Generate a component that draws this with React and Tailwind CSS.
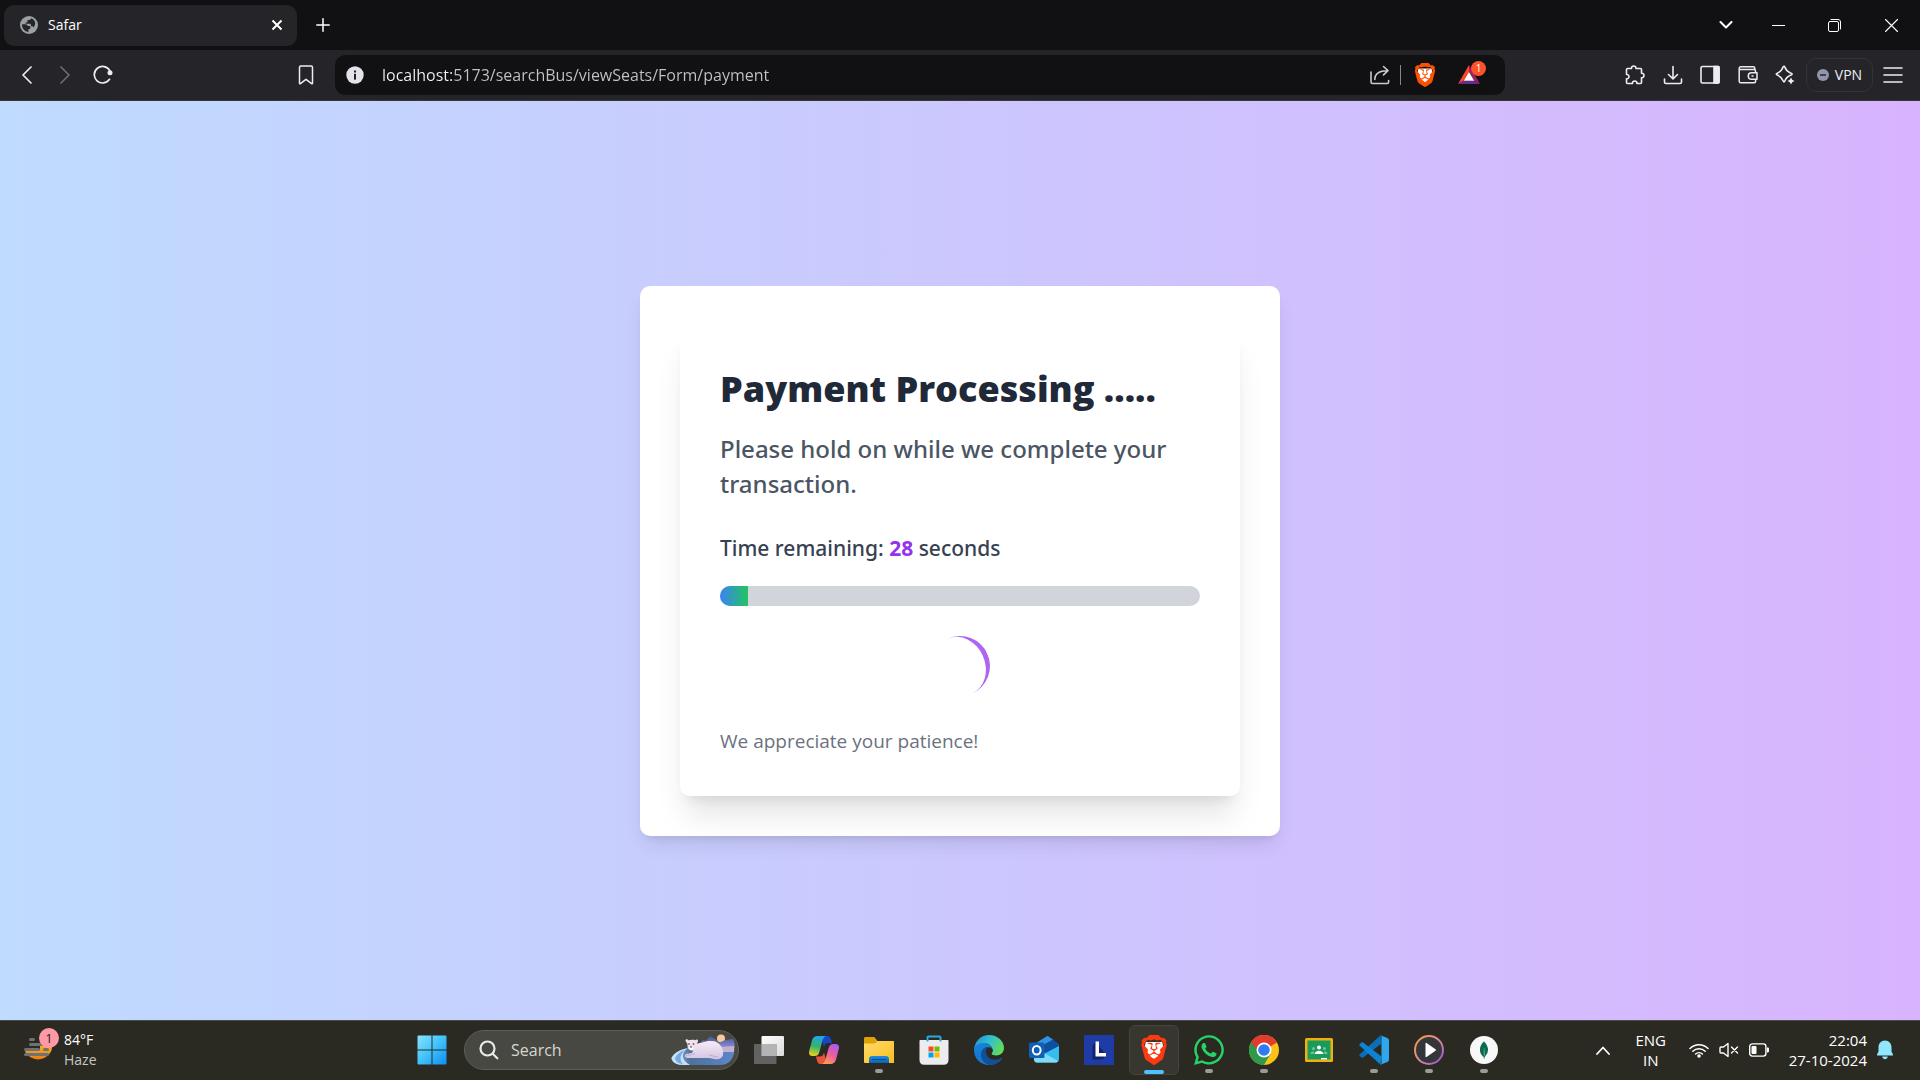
import React from "react";
import { SiBrave, SiMongodb } from "react-icons/si";
import { FaWhatsapp } from "react-icons/fa";

/* ---------- browser icons ---------- */

const line = {
  fill: "none",
  stroke: "currentColor",
  strokeLinecap: "round",
  strokeLinejoin: "round",
};

const GlobeIcon = () => (
  <svg width="18" height="18" viewBox="0 0 18 18">
    <circle cx="9" cy="9" r="9" fill="#9aa0a6" />
    <path
      d="M2 8.200h3.500c1.500 0 2 .8 2 1.800h1.500c1 0 1.500.6 1.500 1.500s-.6 1.500-1.500 1.500H8.500v2.800C4.800 15.800 1.800 12.400 2 8.200z"
      fill="#252529"
    />
    <path
      d="M11 2.300c-.1 1.200-.8 1.700-1.700 1.700H7.500v1.400c0 .6-.4 1-1 1h-1v1.300h4.200c.8 0 1.300.5 1.300 1.300v1.300h.8c.9 0 1.500.5 1.700 1.300 2.900-3.500 2-7.800-2.500-9.300z"
      fill="#252529"
    />
  </svg>
);

const TabCloseIcon = () => (
  <svg width="12" height="12" viewBox="0 0 12 12" {...line} strokeWidth="2" strokeLinecap="butt">
    <path d="M1.500 1.500l9 9M10.500 1.500l-9 9" />
  </svg>
);

const PlusIcon = () => (
  <svg width="14" height="14" viewBox="0 0 14 14" {...line} strokeWidth="1.500">
    <path d="M7 .8v12.400M.8 7h12.400" />
  </svg>
);

const BackIcon = () => (
  <svg width="12" height="18" viewBox="0 0 12 18" {...line} strokeWidth="1.700">
    <path d="M10 1L2 9l8 8" />
  </svg>
);

const ForwardIcon = () => (
  <svg width="12" height="18" viewBox="0 0 12 18" {...line} strokeWidth="1.700">
    <path d="M2 1l8 8-8 8" />
  </svg>
);

const ReloadIcon = () => (
  <svg width="20" height="20" viewBox="0 0 20 20" {...line} strokeWidth="1.700">
    <path d="M16.500 14.300A8.300 8.300 0 1 1 16.800 5.600" />
    <circle cx="17" cy="7.800" r="2.500" fill="currentColor" stroke="none" />
  </svg>
);

const BookmarkIcon = () => (
  <svg width="16" height="20" viewBox="0 0 16 20" {...line} strokeWidth="1.500">
    <path d="M1.500 2.500c0-.8.600-1.400 1.400-1.400h10.200c.8 0 1.400.6 1.400 1.400v15.700c0 .5-.5.700-.9.400L8 14.300l-5.600 4.300c-.4.300-.9.100-.9-.4z" />
  </svg>
);

const InfoIcon = () => (
  <svg width="18" height="18" viewBox="0 0 18 18">
    <circle cx="9" cy="9" r="8.700" fill="#e4e3ea" />
    <rect x="8" y="4.500" width="2" height="2" fill="#222226" />
    <rect x="8" y="7.800" width="2" height="5.800" fill="#222226" />
  </svg>
);

const ShareIcon = () => (
  <svg width="20" height="20" viewBox="0 0 20 20" {...line} strokeWidth="1.600">
    <path d="M1 7v10c0 .9.600 1.500 1.500 1.500h14.600c.9 0 1.500-.6 1.500-1.500v-1.500" />
    <path d="M4.800 14.500C4.800 9 8.500 5.700 17.500 5.700M13.500 1.500l4.500 4.200-4.500 4.200" />
  </svg>
);

const Lion = ({ size, fill }) => (
  <svg width={size} height={size} viewBox="0 0 24 24">
    <path d="M5.500 5.500h13l1 4-2 6.500L12 20.500 6.500 16l-2-6.500z" fill="#fff" />
    <SiBrave size={24} color={fill} />
  </svg>
);

const RewardsIcon = () => (
  <svg width="24" height="20" viewBox="0 0 24 20">
    <path d="M12 0L1 19l5.800-3.300L12 7z" fill="#ff4724" />
    <path d="M12 0l11 19-5.800-3.300L12 7z" fill="#9e1f63" />
    <path d="M1 19h22l-5.800-3.300H6.800z" fill="#662d91" />
    <path d="M12 7l5.200 8.700H6.800z" fill="#fff" />
  </svg>
);

const PuzzleIcon = () => (
  <svg width="20" height="20" viewBox="0 0 20 20" {...line} strokeWidth="1.600">
    <path d="M2.500 3.500h4C6.300 1.900 7.400 1 8.700 1s2.500.9 2.300 2.500h4.500c.7 0 1 .4 1 1V8.300c1.600-.2 2.500.9 2.500 2.200s-.9 2.400-2.500 2.200v4.800c0 .7-.4 1-1 1h-3.600c.2-1.600-.9-2.500-2.200-2.500s-2.400.9-2.200 2.500H2.500c-.7 0-1-.4-1-1v-3.700c1.600.2 2.500-.9 2.500-2.200S3.100 9.300 1.500 9.500v-5c0-.6.300-1 1-1z" />
  </svg>
);

const DownloadIcon = () => (
  <svg width="20" height="20" viewBox="0 0 20 20" {...line} strokeWidth="1.600">
    <path d="M10 1.500v12M5.500 9.500l4.500 4.300 4.500-4.300M1.500 14v3c0 .9.600 1.500 1.500 1.500h14c.9 0 1.500-.6 1.500-1.500v-3" />
  </svg>
);

const SidebarIcon = () => (
  <svg width="20" height="20" viewBox="0 0 20 20" {...line} strokeWidth="1.600">
    <rect x="1" y="1.500" width="18" height="16.500" rx="1.500" />
    <path d="M14 1.500h4.500l.5.500v15.500l-.5.500H14z" fill="currentColor" />
  </svg>
);

const WalletIcon = () => (
  <svg width="20" height="20" viewBox="0 0 20 20" {...line} strokeWidth="1.500">
    <path d="M17.500 7.500V6c0-.8-.6-1.400-1.400-1.400H1.200M1.200 3.500v12.700c0 .9.700 1.600 1.600 1.600h13.300c.9 0 1.500-.6 1.500-1.500v-1.500M1.200 3.500c0-1.100.7-1.700 1.600-1.700h12.400c1 0 1.600.6 1.600 1.500v1.300" />
    <path d="M19 7.800h-5.500c-1.800 0-3.200 1.400-3.200 3.200s1.400 3.300 3.200 3.300H19zM14 11h1" />
  </svg>
);

const SparkleIcon = () => (
  <svg width="20" height="20" viewBox="0 0 20 20" {...line} strokeWidth="1.600">
    <path d="M9 1.200c.4 0 .6.300.8.800 1 2.900 2 4.200 5.200 5.700l1.500.7c.8.400.8 1 0 1.400-3.500 1.300-5.300 2.800-6.600 6-.3.800-.5 1.200-.9 1.200s-.6-.4-.9-1.200c-1.300-3.200-3-4.700-6.200-6-.8-.4-.8-1 0-1.400 3.200-1.300 4.900-2.700 6.200-6.400.3-.5.500-.8.900-.8z" />
    <path d="M16 12.500l1.200 2.300 2.300 1.200-2.300 1.200L16 19.500l-1.200-2.300-2.300-1.200 2.300-1.200z" fill="currentColor" stroke="none" />
  </svg>
);

const MenuIcon = () => (
  <svg width="20" height="16" viewBox="0 0 20 16" {...line} strokeWidth="1.600">
    <path d="M1 1h18M1 8h18M1 15h18" />
  </svg>
);

/* ---------- taskbar icons ---------- */

const HazeIcon = () => (
  <svg width="30" height="30" viewBox="0 0 30 30">
    <defs>
      <linearGradient id="haze" x1="0" y1="0" x2="0" y2="1">
        <stop offset="0" stopColor="#fbc02d" />
        <stop offset="1" stopColor="#ef7c12" />
      </linearGradient>
    </defs>
    <path d="M1 16a14 13 0 0 0 27-6c.3-4-10-6-12 0v5z" fill="url(#haze)" />
    <g stroke="#6f7174" strokeWidth="3" strokeLinecap="round">
      <path d="M6.500 4.500h3M6.500 9.500h15M1.500 14.500h13M20.500 14.500h3M1.500 19.500h22" />
    </g>
  </svg>
);

const WindowsIcon = () => (
  <svg width="30" height="30" viewBox="0 0 30 30">
    <defs>
      <linearGradient id="win" x1="0" y1="0" x2="30" y2="30" gradientUnits="userSpaceOnUse">
        <stop offset="0" stopColor="#8be4fd" />
        <stop offset=".5" stopColor="#3fc2fb" />
        <stop offset="1" stopColor="#0a8bf5" />
      </linearGradient>
    </defs>
    <path
      d="M1.500.5H14.500V14.500H.5V1.500a1 1 0 0 1 1-1zM15.500.5H28.500a1 1 0 0 1 1 1V14.500H15.500zM.5 15.500H14.500V29.500H1.500a1 1 0 0 1-1-1zM15.500 15.500H29.500V28.500a1 1 0 0 1-1 1H15.500z"
      fill="url(#win)"
    />
  </svg>
);

const BearPicture = () => (
  <svg width="64" height="32" viewBox="0 0 64 32">
    <defs>
      <linearGradient id="mount" x1="0" y1="0" x2="0" y2="1">
        <stop offset="0" stopColor="#46569b" />
        <stop offset="1" stopColor="#8d8fd0" />
      </linearGradient>
      <linearGradient id="ice" x1="0" y1="0" x2="1" y2="0">
        <stop offset="0" stopColor="#9cc9ef" />
        <stop offset=".3" stopColor="#4d7299" />
        <stop offset="1" stopColor="#5b86cc" />
      </linearGradient>
      <linearGradient id="fur" x1="0" y1="0" x2="0" y2="1">
        <stop offset="0" stopColor="#f7ecf6" />
        <stop offset="1" stopColor="#d5c4e2" />
      </linearGradient>
    </defs>
    <circle cx="50" cy="4.500" r="4" fill="#f6c9a0" />
    <path d="M29 10l3-4 3 1 4-5 5 3 4 4 6-3 8-1c1.500 3 2 5 1.500 9H29z" fill="url(#mount)" />
    <path d="M48 13l15-1c1 6-1 11-4 14H48z" fill="#c5b1d0" />
    <path d="M50 18h13c-1 7-5 13-14 13H12C5 31 1 28 .5 24 3 19 9 15.500 17 14z" fill="url(#ice)" />
    <path d="M.5 24C3 19 9 15.500 17 14c-6 4-8 11 2 17h-7C5 31 1 28 .5 24z" fill="#c4e1f8" />
    <path d="M4 24c2-4 6-7 10-8-5 4-6 10-2 14-4 0-8-3-8-6z" fill="#76a9dd" />
    <path d="M25 10c6-1 9-3 15-3 9 0 13 8 12 14-.6 3-4 5-9 4-3-.6-4-1-6-1H18c-3 0-5-1-4-3 1-1.500 5-1.500 7-2z" fill="url(#fur)" />
    <path d="M38 21c3 0 5 2 9 2" fill="none" stroke="#bda8d2" strokeWidth="1" />
    <path d="M14.500 6.500c0-1.700 2.300-1.700 2.800-.3 2-.6 5-.8 7 0 .8-1.200 3-.8 2.700 1-.2 1-.8 1.500-.8 2 .8 3.500-1.200 7.300-5 7.300-3.500 0-5-2.500-4.700-5.500.1-1-.4-1.700-1-2.500-.5-.5-1-1.200-1-2z" fill="#efe2ee" />
    <ellipse cx="20" cy="14" rx="2.200" ry="1.700" fill="#fff" />
    <path d="M18.700 12.500h2.600l-1.300 1.500z" fill="#2b2733" />
    <circle cx="18" cy="10" r=".8" fill="#2b2733" />
    <circle cx="22.500" cy="10" r=".8" fill="#2b2733" />
    <path d="M14 22c3-1 7-1 10-2.500" fill="none" stroke="#b7a3cc" strokeWidth=".8" />
  </svg>
);

const TaskViewIcon = () => (
  <svg width="30" height="28" viewBox="0 0 30 28">
    <defs>
      <linearGradient id="tvw" x1="0" y1="0" x2="1" y2="1">
        <stop offset="0" stopColor="#fff" />
        <stop offset="1" stopColor="#d9dadc" />
      </linearGradient>
    </defs>
    <rect x="7.500" y="0" width="22.500" height="20" rx="1" fill="url(#tvw)" />
    <rect x="0" y="8" width="22.500" height="20" rx="1" fill="#68686a" fillOpacity=".9" />
    <path d="M7.500 8h15v12h-15z" fill="#b4b4b5" />
  </svg>
);

const CopilotIcon = () => (
  <svg width="30" height="28" viewBox="0 0 30 28">
    <defs>
      <linearGradient id="cpa" x1=".4" y1="0" x2=".2" y2="1">
        <stop offset="0" stopColor="#22a3e8" />
        <stop offset=".5" stopColor="#35b36b" />
        <stop offset="1" stopColor="#f3d31b" />
      </linearGradient>
      <linearGradient id="cpb" x1=".8" y1="0" x2=".2" y2="1">
        <stop offset="0" stopColor="#a45cf0" />
        <stop offset=".5" stopColor="#ee5e9a" />
        <stop offset="1" stopColor="#fda24d" />
      </linearGradient>
    </defs>
    <path d="M12 0h6.500c2 0 2.800 1.200 3.400 3L23 7h-4c-2.500 0-3.200 1.500-4 4z" fill="#1746c8" />
    <path d="M18 28h-6.500c-2 0-2.800-1.200-3.400-3L7 20.500h4c2.500 0 3.200-1.500 4-4z" fill="#e8553c" />
    <path d="M8.500 0h9C14.500.6 14 3 13 6.500l-2.500 9c-.8 3-2 4.500-5 4.500H3.500C.5 20-.5 18 .2 15L3 4.500C3.800 1.600 5.500 0 8.500 0z" fill="url(#cpa)" />
    <path d="M21.500 28h-9c3-.6 3.500-3 4.500-6.500l2.500-9c.8-3 2-4.500 5-4.500h2c3 0 4 2 3.300 5L27 23.500c-.8 2.900-2.500 4.500-5.500 4.500z" fill="url(#cpb)" />
  </svg>
);

const FolderIcon = () => (
  <svg width="30" height="27" viewBox="0 0 30 27">
    <defs>
      <linearGradient id="fold" x1="0" y1="0" x2="1" y2="1">
        <stop offset="0" stopColor="#ffdc6b" />
        <stop offset="1" stopColor="#f9bd1f" />
      </linearGradient>
      <linearGradient id="foldb" x1="0" y1="0" x2="0" y2="1">
        <stop offset="0" stopColor="#1c8fe0" />
        <stop offset="1" stopColor="#0f61b0" />
      </linearGradient>
    </defs>
    <path d="M0 1.500C0 .6.600 0 1.500 0h8c.7 0 1 .2 1.500.7L13.500 4H29a1 1 0 0 1 1 1v5H0z" fill="#e0a106" />
    <path d="M0 6.500h10c1 0 1.500-.3 2-.9L13.500 4H29a1 1 0 0 1 1 1v21H1a1 1 0 0 1-1-1z" fill="url(#fold)" />
    <path d="M5 26v-4c0-1.800 1.200-3 3-3h14c1.800 0 3 1.200 3 3v4z" fill="url(#foldb)" />
    <path d="M8.500 22.500h13" stroke="#0b4a8c" strokeWidth="1.200" strokeLinecap="round" />
  </svg>
);

const StoreIcon = () => (
  <svg width="30" height="30" viewBox="0 0 30 30">
    <path d="M.5 6c0-.6.400-1 1-1h27c.6 0 1 .4 1 1v19c0 3-1.700 4.700-4.700 4.700H5.200C2.200 29.700.5 28 .5 25z" fill="#ececee" />
    <path d="M8.500 6.500V2.500c0-.6.400-1 1-1h11c.6 0 1 .4 1 1V6.500" fill="none" stroke="#2aa9e0" strokeWidth="2" />
    <path d="M9.500 11.500h5v5h-5z" fill="#f25022" />
    <path d="M15.500 11.500h5v5h-5z" fill="#7fba00" />
    <path d="M9.500 17.500h5v5h-5z" fill="#00a4ef" />
    <path d="M15.500 17.500h5v5h-5z" fill="#ffb900" />
  </svg>
);

const EdgeIcon = () => (
  <svg width="30" height="30" viewBox="0 0 30 30">
    <defs>
      <linearGradient id="edg" x1="0" y1=".2" x2="1" y2=".6">
        <stop offset="0" stopColor="#2490d8" />
        <stop offset=".5" stopColor="#33c1cf" />
        <stop offset="1" stopColor="#62dd55" />
      </linearGradient>
      <linearGradient id="edb" x1="0" y1="0" x2="0" y2="1">
        <stop offset="0" stopColor="#1383d8" />
        <stop offset="1" stopColor="#1577cf" />
      </linearGradient>
    </defs>
    <path d="M0 14C1.500 9 6 7.500 10 8c5 .6 8.500 4 8.500 7.500L12 19c0 3 4 6.500 9 6.300 3-.1 5-1.300 6.300-2.300.5-.3.900 0 .6.500C25.500 27.500 20.500 30 15 30 6.500 30 0 23.500 0 15z" fill="url(#edb)" />
    <path d="M10 13c-2.500 2-3.500 5-3 8 .7 4.500 4 8 8.500 9 5-.2 9.700-2.500 12.400-6.500.3-.5-.1-.8-.6-.5-1.500 1-3.500 1.700-6 1.700-5 0-9.300-3.200-9.300-7.700 0-2.300 1.200-4 3-4.700-1.500-.6-3.400-.5-5 .7z" fill="#124f97" />
    <path d="M0 14C1.200 6 7 0 15 0c9 0 15 6.500 15 13 0 4.500-3.500 7.500-8 7.500-3.500 0-5-1.200-4.500-2.200.6-.8 1.200-1.600 1.200-3C18.700 11.500 14.500 8 9.500 8 5 8 1.500 10.500 0 14z" fill="url(#edg)" />
    <path d="M15 12.300c2.300 0 3.700 1.500 3.700 3.500 0 1.500-1.200 2-1.200 3.200 0 .8 1.500 1.500 3.500 1.500-2 2-7.500 1-9-2.500-.6-2.500.5-5.700 3-5.700z" fill="#2a2a23" />
  </svg>
);

const OutlookIcon = () => (
  <svg width="30" height="28" viewBox="0 0 30 28">
    <path d="M5 8.500L17.500.6c.6-.4 1.200-.4 1.800 0L30 8.500V15L5 24z" fill="#1272c4" />
    <path d="M9 9L24 3.500l6 5v4L17 20 5 14z" fill="#0d4fa0" />
    <path d="M5 8.500L17.500.6c.6-.4 1.200-.4 1.800 0l4.700 3L9 12z" fill="#2f93df" />
    <path d="M30 10v13c0 2.200-1.300 3.500-3.500 3.500H8C6 26.500 5 25 5 23z" fill="#35bdf0" />
    <path d="M5 21l10-4 14 8c-.7 1-1.500 1.500-3 1.500H8c-2 0-3-1.500-3-3.500z" fill="#7fdcf8" />
    <rect x="0" y="6.500" width="15.500" height="15.500" rx="1.500" fill="#0f5fb8" />
    <ellipse cx="7.700" cy="14.200" rx="3.900" ry="4.300" fill="none" stroke="#fff" strokeWidth="2" />
  </svg>
);

const LIcon = () => (
  <svg width="30" height="30" viewBox="0 0 30 30">
    <rect width="30" height="30" fill="#1f3ca6" />
    <path d="M11.500 6.500L8.500 11v13.500h10l4-4z" fill="#10246e" />
    <path d="M11.500 6.500h3.500V18h7v3.500H11.500z" fill="#fff" />
  </svg>
);

const ChromeIcon = () => (
  <svg width="30" height="30" viewBox="0 0 30 30">
    <circle cx="15" cy="15" r="15" fill="#fbc116" />
    <path d="M15 15L2 7.500A15 15 0 0 0 15 30l6.500-11.200z" fill="#2c9a48" />
    <path d="M15 15H8.500L2 7.500a15 15 0 0 1 26 0z" fill="#e33b2e" />
    <circle cx="15" cy="15" r="7.500" fill="#fff" />
    <circle cx="15" cy="15" r="5.800" fill="#2f7cf0" />
  </svg>
);

const ClassroomIcon = () => (
  <svg width="28" height="24" viewBox="0 0 28 24">
    <rect width="28" height="24" rx="1.500" fill="#efb10e" />
    <rect x="2.500" y="2.500" width="23" height="19" fill="#1b9b5b" />
    <circle cx="14" cy="9.500" r="2" fill="#fff" />
    <path d="M9.500 16c0-2 2.500-3.300 4.500-3.300s4.500 1.300 4.500 3.300z" fill="#fff" />
    <g fill="#6fc597">
      <circle cx="8.500" cy="10.500" r="1.500" />
      <circle cx="19.500" cy="10.500" r="1.500" />
      <path d="M5.500 16c0-1.700 1.500-2.800 3.500-2.800L8.500 16zM22.500 16c0-1.700-1.500-2.800-3.500-2.800l.5 2.800z" />
    </g>
    <path d="M16 20h6v1.500h-6z" fill="#fff" />
  </svg>
);

const CodeIcon = () => (
  <svg width="30" height="30" viewBox="0 0 30 30">
    <path d="M21.500.3L.8 19.200c-.6.500-.6 1.300 0 1.800l1.700 1.500c.5.400 1.100.4 1.600.1L22.500 8.500z" fill="#0a6fb8" />
    <path d="M21.500 29.700L.8 10.800C.2 10.300.2 9.500.8 9l1.700-1.500c.5-.4 1.100-.4 1.600-.1L22.500 21.500z" fill="#0b84d4" />
    <path d="M21.500 29.800c-.5-.3 1-.5 1-1.800V2c0-1.300-1.500-1.500-1-1.800L28.300 3c1 .5 1.700 1.300 1.700 2.500v19c0 1.200-.7 2-1.700 2.500z" fill="#2fa6ee" />
  </svg>
);

const MediaIcon = () => (
  <svg width="30" height="30" viewBox="0 0 30 30">
    <defs>
      <linearGradient id="med" x1="0" y1="0" x2="1" y2="1">
        <stop offset="0" stopColor="#f79a3c" />
        <stop offset=".5" stopColor="#d98a9a" />
        <stop offset="1" stopColor="#9152d8" />
      </linearGradient>
    </defs>
    <circle cx="15" cy="15" r="14" fill="#35363a" stroke="url(#med)" strokeWidth="2" />
    <path d="M11.500 8.500c0-.6.500-.8 1-.5l9 6.300c.5.400.5 1 0 1.400l-9 6.300c-.5.300-1 .1-1-.5z" fill="#fff" />
  </svg>
);

const MongoIcon = () => (
  <svg width="28" height="28" viewBox="0 0 28 28">
    <circle cx="14" cy="14" r="14" fill="#f7f8f7" />
    <g transform="translate(5 5)">
      <SiMongodb size={18} color="#0b6b50" />
    </g>
  </svg>
);

const WifiIcon = () => (
  <svg width="20" height="16" viewBox="0 0 20 16" {...line} strokeWidth="1.500">
    <path d="M1 6.500a12.500 12.500 0 0 1 18 0M3.800 9.300a8.700 8.700 0 0 1 12.400 0M6.600 12a4.900 4.900 0 0 1 6.800 0" />
    <circle cx="10" cy="14" r="1.800" fill="currentColor" stroke="none" />
  </svg>
);

const MuteIcon = () => (
  <svg width="20" height="16" viewBox="0 0 20 16" {...line} strokeWidth="1.400">
    <path d="M9 1.500v13L4.500 11H2c-.6 0-1-.4-1-1V6c0-.6.400-1 1-1h2.500zM12.500 5l6 6M18.500 5l-6 6" />
  </svg>
);

const BatteryIcon = () => (
  <svg width="20" height="14" viewBox="0 0 20 14">
    <rect x=".7" y=".9" width="16.200" height="12.200" rx="2.500" fill="none" stroke="currentColor" strokeWidth="1.400" />
    <rect x="2.500" y="3" width="5" height="8" rx="1" fill="currentColor" />
    <path d="M18 4.500h.7c.8 0 1.300.5 1.300 1.200v2.600c0 .7-.5 1.200-1.300 1.200H18z" fill="currentColor" />
  </svg>
);

const BellIcon = () => (
  <svg width="16" height="20" viewBox="0 0 16 20" fill="#8fe6fd">
    <path d="M8 .5c4 0 6.500 3 6.500 6.800v4.200L16 14.500c.2.500 0 1-.6 1H.6c-.6 0-.8-.5-.6-1l1.500-3V7.300C1.500 3.500 4 .5 8 .5z" />
    <path d="M5.200 16.500h5.600c-.3 1.800-1.500 2.700-2.800 2.700s-2.500-.9-2.800-2.700z" />
  </svg>
);

/* ---------- browser ---------- */

const IconButton = ({ label, className = "", children }) => (
  <button aria-label={label} className={`flex h-8 items-center justify-center ${className}`}>
    {children}
  </button>
);

function TabStrip() {
  return (
    <div className="flex h-[50px] items-center bg-[#111113] pl-1 text-white">
      <div className="flex h-[41px] w-[293px] items-center rounded-[10px] bg-[#252529] pl-4 pr-2.5">
        <GlobeIcon />
        <span className="ml-[10px] flex-1 text-sm">Safar</span>
        <IconButton label="Close tab" className="w-5">
          <TabCloseIcon />
        </IconButton>
      </div>
      <IconButton label="New tab" className="ml-2.5 w-8">
        <PlusIcon />
      </IconButton>
      <div className="ml-auto flex">
        <IconButton label="Search tabs" className="w-12">
          <svg width="14" height="8" viewBox="0 0 14 8" {...line} strokeWidth="2">
            <path d="M1.500 1L7 6.500 12.500 1" />
          </svg>
        </IconButton>
        <IconButton label="Minimize" className="w-[56px]">
          <svg width="13" height="13" viewBox="0 0 13 13" {...line} strokeWidth="1">
            <path d="M0 6.500h13" />
          </svg>
        </IconButton>
        <IconButton label="Restore" className="w-[56px]">
          <svg width="13" height="13" viewBox="0 0 13 13" {...line} strokeWidth="1">
            <rect x=".5" y="2.500" width="10" height="10" rx="1.500" />
            <path d="M3 .5h7c1.500 0 2.500 1 2.500 2.500v7" />
          </svg>
        </IconButton>
        <IconButton label="Close" className="w-[58px]">
          <svg width="13" height="13" viewBox="0 0 13 13" {...line} strokeWidth="1.100">
            <path d="M.5.5l12 12M12.500.5l-12 12" />
          </svg>
        </IconButton>
      </div>
    </div>
  );
}

function Toolbar() {
  return (
    <div className="flex h-[51px] items-center border-b border-[#35353a] bg-[#252529] text-[#ededf1]">
      <div className="flex w-[335px] shrink-0 items-center pl-2 pr-3">
        <IconButton label="Back" className="w-[38px]">
          <BackIcon />
        </IconButton>
        <IconButton label="Forward" className="w-[38px] text-[#6c6c72]">
          <ForwardIcon />
        </IconButton>
        <IconButton label="Reload" className="w-[38px]">
          <ReloadIcon />
        </IconButton>
        <IconButton label="Bookmark" className="ml-auto w-[34px]">
          <BookmarkIcon />
        </IconButton>
      </div>
      <div className="flex h-10 min-w-0 flex-1 items-center rounded-[10px] bg-[#111113] pl-[11px] pr-6">
        <InfoIcon />
        <input
          type="text"
          aria-label="Address"
          defaultValue="localhost:5173/searchBus/viewSeats/Form/payment"
          className="ml-[18px] h-8 min-w-0 flex-1 bg-[linear-gradient(to_right,#f4f4f6_70px,#c3c3c8_70px)] bg-clip-text text-base text-transparent outline-none"
        />
        <IconButton label="Share" className="w-6 text-[#c9c9ce]">
          <ShareIcon />
        </IconButton>
        <span className="ml-2 h-5 w-px bg-[#85858b]" />
        <IconButton label="Brave Shields" className="ml-3 w-6">
          <Lion size={24} fill="#ff5000" />
        </IconButton>
        <button aria-label="Brave Rewards" className="relative ml-5 flex h-8 w-6 items-center">
          <RewardsIcon />
          <span className="absolute top-0.5 left-[14px] flex h-[15px] w-[15px] items-center justify-center rounded-full bg-[#fb542b] text-[10px] text-white">
            1
          </span>
        </button>
      </div>
      <div className="flex w-[415px] shrink-0 items-center justify-end pr-2">
        <IconButton label="Extensions" className="w-[38px]">
          <PuzzleIcon />
        </IconButton>
        <IconButton label="Downloads" className="w-[37px]">
          <DownloadIcon />
        </IconButton>
        <IconButton label="Sidebar" className="w-[38px]">
          <SidebarIcon />
        </IconButton>
        <IconButton label="Wallet" className="w-[37px]">
          <WalletIcon />
        </IconButton>
        <IconButton label="Leo AI" className="mr-0.5 w-[38px]">
          <SparkleIcon />
        </IconButton>
        <button className="flex h-[34px] w-[67px] items-center justify-center gap-1.5 rounded-[10px] border border-[#323237] text-sm">
          <svg width="12" height="12" viewBox="0 0 12 12">
            <circle cx="6" cy="6" r="6" fill="#9395ae" />
            <path d="M3 6h6" stroke="#252529" strokeWidth="1.500" />
          </svg>
          VPN
        </button>
        <IconButton label="Menu" className="w-[39px]">
          <MenuIcon />
        </IconButton>
      </div>
    </div>
  );
}

/* ---------- page ---------- */

function PaymentPage() {
  const total = 30;
  const left = 28;
  const progress = 5.85;
  return (
    <main className="flex flex-1 items-center justify-center bg-[linear-gradient(to_right,#bfdbfe,#d8b4fe)]">
      <section className="w-full max-w-[640px] rounded-[10px] bg-white p-10 shadow-[0_12px_19px_-4px_rgb(0_0_0/0.1),0_5px_8px_-5px_rgb(0_0_0/0.1)]">
        <div className="rounded-[10px] bg-white p-10 shadow-[0_25px_31px_-6px_rgb(0_0_0/0.1),0_10px_13px_-8px_rgb(0_0_0/0.1)]">
          <h1 className="mb-5 text-[36px] leading-[45px] font-extrabold whitespace-nowrap text-[#1f2937]">
            Payment Processing .....
          </h1>
          <p className="mb-[30px] font-['Noto_Sans',sans-serif] text-[24px] leading-[35px] font-medium text-[#4b5563]">
            Please hold on while we complete your transaction.
          </p>
          <p className="mb-5 font-['Noto_Sans',sans-serif] text-[21px] leading-[35px] font-medium text-[#374151]">
            Time remaining: <span className="font-bold text-[#9333ea]">{left}</span> seconds
          </p>
          <div
            role="progressbar"
            aria-label="Payment progress"
            aria-valuemin={0}
            aria-valuemax={total}
            aria-valuenow={total - left}
            className="mb-[30px] h-5 overflow-hidden rounded-full bg-[#d1d5db]"
          >
            <div
              className="h-full bg-[linear-gradient(to_right,#3b82f6,#22c55e)]"
              style={{ width: `${progress}%` }}
            />
          </div>
          <div className="mb-[30px] flex justify-center">
            <div className="h-[60px] w-[60px] rotate-[66deg] rounded-full border-t-[5px] border-[#ae66f2]" />
          </div>
          <p className="text-[19px] leading-[30px] text-[#6b7280]">We appreciate your patience!</p>
        </div>
      </section>
    </main>
  );
}

/* ---------- taskbar ---------- */

const Slot = ({ label, running, active, children }) => (
  <button
    aria-label={label}
    className={`relative flex h-[50px] w-[50px] items-center justify-center rounded-md ${
      active ? "border border-[#45453f] bg-[#37372f]" : ""
    }`}
  >
    {children}
    {running && <span className="absolute bottom-0.5 h-1 w-2 rounded-full bg-[#9b9b97]" />}
    {active && <span className="absolute bottom-0 h-1 w-5 rounded-full bg-[#4cc2ff]" />}
  </button>
);

function Taskbar() {
  return (
    <footer className="grid h-[60px] grid-cols-[1fr_auto_1fr] items-center bg-[#2a2a23] text-white shadow-[inset_0_1px_0_#4b4c46]">
      <button aria-label="Weather" className="relative flex items-center pl-6 text-left text-sm leading-5">
        <HazeIcon />
        <span className="absolute -top-0.5 left-[39px] flex h-5 w-5 items-center justify-center rounded-full bg-[#ff99a4] text-[13px] text-[#2a1a1c]">
          1
        </span>
        <span className="ml-2.5">
          <span className="block">84°F</span>
          <span className="block text-[#c6c6c3]">Haze</span>
        </span>
      </button>

      <div className="flex items-center gap-[5px] pr-1">
        <Slot label="Start">
          <WindowsIcon />
        </Slot>
        <label className="ml-0.5 flex h-10 w-[275px] items-center rounded-full border border-[#5e5e58] bg-[#484842] pl-3.5 pr-[3px]">
          <svg width="20" height="20" viewBox="0 0 20 20" {...line} strokeWidth="2.200" className="text-[#e6ebea]">
            <circle cx="8.500" cy="8.500" r="7" />
            <path d="M13.700 13.700l4.600 4.600" />
          </svg>
          <input
            type="search"
            aria-label="Search"
            placeholder="Search"
            className="ml-3 min-w-0 flex-1 bg-transparent text-base text-white outline-none placeholder:text-[#d6d6d2]"
          />
          <BearPicture />
        </label>
        <Slot label="Task view">
          <TaskViewIcon />
        </Slot>
        <Slot label="Copilot">
          <CopilotIcon />
        </Slot>
        <Slot label="File Explorer" running>
          <FolderIcon />
        </Slot>
        <Slot label="Microsoft Store">
          <StoreIcon />
        </Slot>
        <Slot label="Edge">
          <EdgeIcon />
        </Slot>
        <Slot label="Outlook">
          <OutlookIcon />
        </Slot>
        <Slot label="L">
          <LIcon />
        </Slot>
        <Slot label="Brave" active>
          <Lion size={30} fill="#fb3a12" />
        </Slot>
        <Slot label="WhatsApp" running>
          <FaWhatsapp size={34} color="#25d366" />
        </Slot>
        <Slot label="Chrome" running>
          <ChromeIcon />
        </Slot>
        <Slot label="Classroom">
          <ClassroomIcon />
        </Slot>
        <Slot label="Visual Studio Code" running>
          <CodeIcon />
        </Slot>
        <Slot label="Media Player" running>
          <MediaIcon />
        </Slot>
        <Slot label="MongoDB Compass" running>
          <MongoIcon />
        </Slot>
      </div>

      <div className="flex items-center justify-end pr-[27px] text-[15px] leading-5">
        <button aria-label="Show hidden icons" className="flex h-10 w-10 items-center justify-center">
          <svg width="14" height="9" viewBox="0 0 14 9" {...line} strokeWidth="1.800">
            <path d="M1 8l6-6.500L13 8" />
          </svg>
        </button>
        <button className="w-14 text-center">
          <span className="block">ENG</span>
          <span className="block">IN</span>
        </button>
        <button aria-label="Network, sound and battery" className="ml-2.5 flex items-center gap-2.5">
          <WifiIcon />
          <MuteIcon />
          <BatteryIcon />
        </button>
        <button className="ml-5 text-right">
          <span className="block">22:04</span>
          <span className="block">27-10-2024</span>
        </button>
        <button aria-label="Notifications" className="ml-2.5">
          <BellIcon />
        </button>
      </div>
    </footer>
  );
}

export default function App() {
  return (
    <div className="flex min-h-screen flex-col font-['Segoe_UI','Open_Sans','Noto_Sans',sans-serif]">
      <header>
        <TabStrip />
        <Toolbar />
      </header>
      <PaymentPage />
      <Taskbar />
    </div>
  );
}
